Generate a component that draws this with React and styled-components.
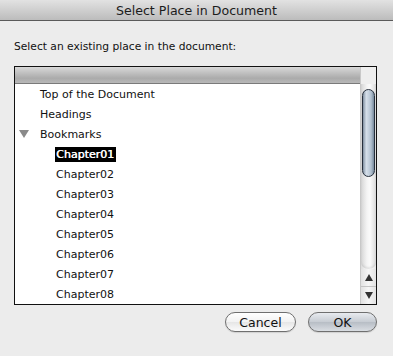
import React from "react";
import styled, { createGlobalStyle } from "styled-components";

const Global = createGlobalStyle`
  html, body { margin: 0; padding: 0; background: #ececec; }
  body { font-family: "DejaVu Sans", "Liberation Sans", sans-serif; }
`;

const Window = styled.div`
  width: 393px;
  height: 356px;
  background: #ececec;
  display: flex;
  flex-direction: column;
  overflow: hidden;
`;

const TitleBar = styled.div`
  height: 20px;
  border-bottom: 1px solid #5a5a5a;
  background: linear-gradient(#e2e2e2, #bcbcbc);
  display: flex;
  align-items: center;
  justify-content: center;
  font-family: "DejaVu Sans", sans-serif;
  font-size: 12.6px;
  color: #1c1c1c;
`;

const Body = styled.div`
  display: flex;
  flex-direction: column;
  padding: 19px 16px 0 14px;
`;

const Label = styled.div`
  font-size: 10.7px;
  color: #111;
  height: 14px;
  line-height: 14px;
  margin-bottom: 12px;
`;

const ListBox = styled.div`
  height: 237px;
  border: 1px solid #111;
  background: #fff;
  display: flex;
  overflow: hidden;
`;

const ListMain = styled.div`
  flex: 1;
  display: flex;
  flex-direction: column;
  overflow: hidden;
`;

const Header = styled.div`
  height: 16px;
  flex: none;
  border-bottom: 1px solid #7a7a7a;
  background: linear-gradient(#d8d8d8, #ababab 70%, #b8b8b8);
`;

const Row = styled.div`
  height: 20px;
  flex: none;
  display: flex;
  align-items: center;
  padding-left: ${(p) => (p.$level ? 40 : 24)}px;
  position: relative;
  font-size: 11px;
  color: #111;
`;

const RowText = styled.span`
  padding: 1px;
  line-height: 13px;
  ${(p) =>
    p.$selected &&
    `background: #000; color: #fff; text-shadow: 0.5px 0 0 #fff; padding-right: 2px;`}
`;

const Disclosure = styled.svg`
  position: absolute;
  left: 4px;
  top: 6px;
`;

const ScrollBar = styled.div`
  width: 15px;
  flex: none;
  border-left: 1px solid #c8c8c8;
  display: flex;
  flex-direction: column;
  background: linear-gradient(to right, #dcdcdc, #f7f7f7 35%, #fbfbfb 60%, #e4e4e4);
`;

const ScrollCorner = styled.div`
  height: 17px;
  flex: none;
  background: #eeeeee;
`;

const Track = styled.div`
  flex: 1;
  display: flex;
  flex-direction: column;
  padding: 5px 1px 0 1px;
  border-bottom-left-radius: 7px;
  border-bottom-right-radius: 7px;
  background: linear-gradient(to right, #d6d6d6, #f4f4f4 40%, #fafafa 60%, #dadada);
  box-shadow: inset 0 -2px 2px rgba(0,0,0,0.08);
`;

const Thumb = styled.div`
  height: 86px;
  border: 1px solid #27303c;
  border-radius: 7px;
  background: linear-gradient(to right, #7f8fa0, #d6e0ea 30%, #c2cfdc 55%, #aebdcc 75%, #75889b);
`;

const ArrowBox = styled.div`
  height: 17px;
  flex: none;
  display: flex;
  align-items: center;
  justify-content: center;
  border-top: ${(p) => (p.$sep ? "1px solid #c4c4c4" : "none")};
  background: linear-gradient(to right, #e2e2e2, #f6f6f6 50%, #e2e2e2);
`;

const Footer = styled.div`
  display: flex;
  justify-content: flex-end;
  gap: 12px;
  padding: 7px 16px 0 0;
`;

const Button = styled.button`
  height: 20px;
  width: ${(p) => p.$w}px;
  border: 1px solid #6f6f6f;
  border-radius: 10px;
  padding: 0;
  font-family: "DejaVu Sans", sans-serif;
  font-size: 12.5px;
  color: #111;
  background: ${(p) =>
    p.$default
      ? "linear-gradient(#e8ebef, #c6cbd2 50%, #b7bdc5 51%, #d9dde2)"
      : "linear-gradient(#ffffff, #f2f2f2 50%, #e6e6e6 51%, #fbfbfb)"};
  box-shadow: 0 1px 1px rgba(0,0,0,0.12);
`;

const items = [
  { text: "Top of the Document" },
  { text: "Headings" },
  { text: "Bookmarks", open: true },
  { text: "Chapter01", level: 1, selected: true },
  { text: "Chapter02", level: 1 },
  { text: "Chapter03", level: 1 },
  { text: "Chapter04", level: 1 },
  { text: "Chapter05", level: 1 },
  { text: "Chapter06", level: 1 },
  { text: "Chapter07", level: 1 },
  { text: "Chapter08", level: 1 },
];

export default function App() {
  return (
    <Window>
      <Global />
      <TitleBar>Select Place in Document</TitleBar>
      <Body>
        <Label>Select an existing place in the document:</Label>
        <ListBox>
          <ListMain>
            <Header />
            {items.map((it) => (
              <Row key={it.text} $level={it.level}>
                {it.open && (
                  <Disclosure width="10" height="8" viewBox="0 0 10 8">
                    <path d="M0 0 L10 0 L5 8 Z" fill="#8a8a8a" />
                  </Disclosure>
                )}
                <RowText $selected={it.selected}>{it.text}</RowText>
              </Row>
            ))}
          </ListMain>
          <ScrollBar>
            <ScrollCorner />
            <Track>
              <Thumb />
            </Track>
            <ArrowBox>
              <svg width="8" height="7" viewBox="0 0 8 7">
                <path d="M4 0 L8 7 L0 7 Z" fill="#333" />
              </svg>
            </ArrowBox>
            <ArrowBox $sep>
              <svg width="8" height="7" viewBox="0 0 8 7">
                <path d="M0 0 L8 0 L4 7 Z" fill="#333" />
              </svg>
            </ArrowBox>
          </ScrollBar>
        </ListBox>
      </Body>
      <Footer>
        <Button $w={71}>Cancel</Button>
        <Button $w={69} $default>OK</Button>
      </Footer>
    </Window>
  );
}
